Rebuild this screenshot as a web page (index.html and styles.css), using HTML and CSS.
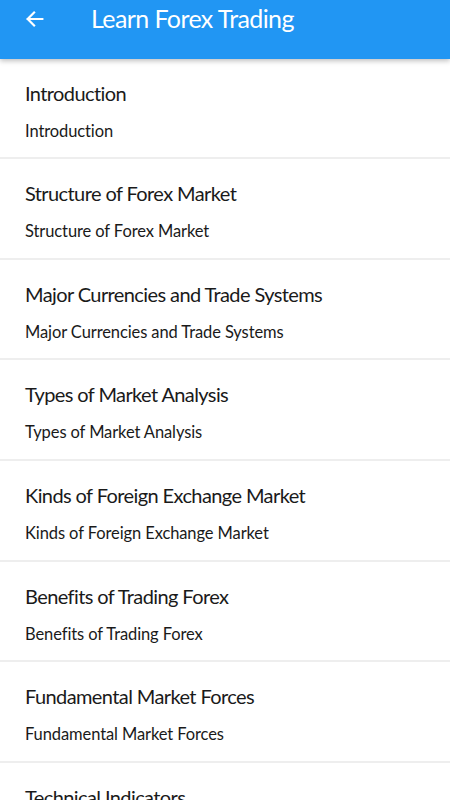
FILE: index.html
```html
<!DOCTYPE html>
<html lang="en">
<head>
    <meta charset="UTF-8">
    <meta name="viewport" content="width=device-width, initial-scale=1.0">
    <title>Learn Forex Trading</title>
<link rel="stylesheet" href="styles.css">
</head>
<body>
<div class="appBar">
    <span class="backBtn">
        <svg width="22" height="22" viewBox="0 0 24 24">
            <path d="M20 12H4M11 5l-7 7 7 7" fill="none" stroke="#fff" stroke-width="2.4" stroke-linecap="square"/>
        </svg>
    </span>
    <h1>Learn Forex Trading</h1>
</div>

<!-- Lesson list -->
<div class="lessonList">
    <div class="lesson">
        <h3>Introduction</h3>
        <p>Introduction</p>
    </div>
    <div class="lesson">
        <h3>Structure of Forex Market</h3>
        <p>Structure of Forex Market</p>
    </div>
    <div class="lesson">
        <h3>Major Currencies and Trade Systems</h3>
        <p>Major Currencies and Trade Systems</p>
    </div>
    <div class="lesson">
        <h3>Types of Market Analysis</h3>
        <p>Types of Market Analysis</p>
    </div>
    <div class="lesson">
        <h3>Kinds of Foreign Exchange Market</h3>
        <p>Kinds of Foreign Exchange Market</p>
    </div>
    <div class="lesson">
        <h3>Benefits of Trading Forex</h3>
        <p>Benefits of Trading Forex</p>
    </div>
    <div class="lesson">
        <h3>Fundamental Market Forces</h3>
        <p>Fundamental Market Forces</p>
    </div>
    <div class="lesson">
        <h3>Technical Indicators</h3>
        <p>Technical Indicators</p>
    </div>
</div>
</body>
</html>
```

FILE: styles.css
```css
body {
    margin: 0;
    font-family: Lato, sans-serif;
    background-color: #fff;
    color: #1a1a1a;
    height: 800px;
    overflow: hidden;
}
.appBar {
    position: relative;
    z-index: 2;
    height: 59px;
    display: flex;
    align-items: flex-start;
    background-color: #2196f3;
    box-shadow: 0 2px 5px rgba(0, 0, 0, 0.25);
}
.backBtn {
    display: flex;
    margin: 8px 0 0 24px;
}
.appBar h1 {
    margin: 3px 0 0 45px;
    font-size: 25px;
    font-weight: normal;
    letter-spacing: -0.6px;
    color: #fff;
}
.lessonList {
    display: flex;
    flex-direction: column;
    margin-top: -0.5px;
}
.lesson {
    flex-shrink: 0;
    height: 98.67px;
    padding: 0 25px;
    border-bottom: 2px solid #eeeeee;
}
.lesson h3 {
    margin: 22px 0 0;
    font-size: 20px;
    font-weight: normal;
    line-height: 24px;
    letter-spacing: -0.6px;
}
.lesson p {
    margin: 16px 0 0;
    font-size: 16.5px;
    line-height: 20px;
    letter-spacing: -0.1px;
}
```
